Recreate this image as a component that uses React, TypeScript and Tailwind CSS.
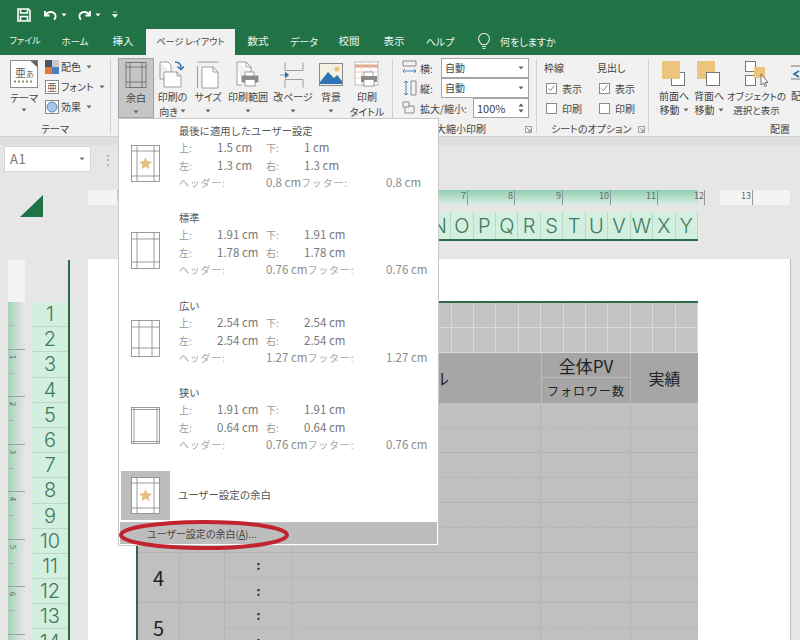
import React from "react";

const FONT = "font-['Noto_Sans_CJK_JP','Liberation_Sans',sans-serif] [font-feature-settings:'palt']";
const NUM = "font-['Inter','Liberation_Sans',sans-serif] font-light";

const Caret = ({ className = "" }: { className?: string }) => (
  <svg width="6" height="4" viewBox="0 0 6 4" className={className}>
    <path d="M0.500 0.500h5L3 3.500z" fill="currentColor" />
  </svg>
);

function SaveIcon() {
  return (
    <svg width="14" height="14" viewBox="0 0 14 14" fill="none" stroke="#fff" strokeWidth="1.600">
      <path d="M1 1h10.500L13 2.500V13H1z" />
      <path d="M3.500 1.500v3.500h7V1.500M3.500 13V8.500h7V13" />
    </svg>
  );
}
function UndoIcon({ flip = false }: { flip?: boolean }) {
  return (
    <svg width="15" height="14" viewBox="0 0 15 14" fill="none" stroke="#fff" strokeWidth="1.900" style={flip ? { transform: "scaleX(-1)" } : undefined}>
      <path d="M2 3v4.500h4.500" />
      <path d="M2.500 7C5 3.500 9 3 11.500 5.500c1.700 1.800 1.300 4.500-.5 6" />
    </svg>
  );
}
function Bulb() {
  return (
    <svg width="14" height="17" viewBox="0 0 14 17" fill="none" stroke="#dfe9e3" strokeWidth="1.100">
      <path d="M4.500 11.500C3.500 9.500 1.500 8.500 1.500 6a5.500 5.500 0 0 1 11 0c0 2.500-2 3.500-3 5.500z" />
      <path d="M5 13.500h4M5.500 15.500h3" />
    </svg>
  );
}

function ThemeIcon() {
  return (
    <svg width="28" height="28" viewBox="0 0 28 28">
      <rect x="0.500" y="0.500" width="27" height="27" fill="#fff" stroke="#8d8d8d" />
      <path d="M20 0.500h7.500v7z" fill="#666" />
      <text x="5" y="17" fontSize="11" fill="#666">亜</text>
      <text x="16" y="17" fontSize="8" fill="#666">あ</text>
      <path d="M4 21.500h2M8 21.500h2M12 21.500h2M16 21.500h2M20 21.500h2" stroke="#8a8f5b" strokeWidth="2" />
    </svg>
  );
}
function ColorIcon() {
  return (
    <svg width="14" height="14" viewBox="0 0 14 14" className="shrink-0">
      <rect width="7" height="7" fill="#44546a" />
      <rect x="7" width="7" height="7" fill="#c9c9c9" />
      <rect y="7" width="7" height="7" fill="#e07c3a" />
      <rect x="7" y="7" width="7" height="7" fill="#4d7fbd" />
    </svg>
  );
}
function FontIcon() {
  return (
    <div className="w-[14px] h-[14px] shrink-0 border border-[#8a8a8a] bg-white text-[10px] leading-[12px] text-center text-[#666]">亜</div>
  );
}
function EffectIcon() {
  return (
    <svg width="14" height="14" viewBox="0 0 14 14" className="shrink-0">
      <rect x="0.500" y="0.500" width="13" height="13" fill="#fff" stroke="#8a8a8a" />
      <circle cx="7" cy="7" r="5" fill="#a9c4e6" stroke="#5b87c0" />
    </svg>
  );
}
function MarginIcon() {
  return (
    <svg width="22" height="27" viewBox="0 0 22 27" fill="none" stroke="#666" strokeWidth="0.800">
      <rect x="1" y="0.500" width="20" height="25" />
      <path d="M1 5h20M1 20h20M5 0.500v25M17 0.500v25" />
    </svg>
  );
}
function OrientIcon() {
  return (
    <svg width="27" height="28" viewBox="0 0 27 28" fill="none" stroke="#888" strokeWidth="0.800">
      <path d="M1 1h8l3 3v7" fill="#fff" />
      <path d="M1 1v17h4" />
      <path d="M5 11h13l4 4v11H5z" fill="#fff" />
      <path d="M18 11v4h4" />
      <path d="M16 1c4 0 6 2 6 6" stroke="#2f6ea8" strokeWidth="1.500" />
      <path d="M18.500 5.500l3.500 3 3-3" stroke="#2f6ea8" strokeWidth="1.500" />
    </svg>
  );
}
function SizeIcon() {
  return (
    <svg width="22" height="28" viewBox="0 0 22 28" fill="none" stroke="#888" strokeWidth="0.800">
      <path d="M0.500 5v22M0.500 1h21" />
      <path d="M5 6h11l5 5v16H5z" fill="#fff" />
      <path d="M16 6v5h5" />
    </svg>
  );
}
function PrinterOverlay() {
  return (
    <g>
      <rect x="10" y="11" width="9" height="5" fill="#fff" stroke="#888" strokeWidth="0.800" />
      <rect x="7" y="15" width="16" height="6" fill="#8a8a8a" />
      <rect x="10" y="18.500" width="10" height="6.500" fill="#fff" stroke="#888" strokeWidth="0.800" />
    </g>
  );
}
function AreaIcon() {
  return (
    <svg width="27" height="28" viewBox="0 0 27 28" fill="none" stroke="#888" strokeWidth="0.800">
      <path d="M2 1h9l5 5v5M2 1v23h5" fill="#fff" />
      <path d="M11 1v5h5" />
      <PrinterOverlay />
    </svg>
  );
}
function BreakIcon() {
  return (
    <svg width="26" height="26" viewBox="0 0 26 26" fill="none" stroke="#888" strokeWidth="0.800">
      <path d="M5 0.500v8h18v-8M5 25.500v-8h18v8" />
      <path d="M0 13h6" stroke="#6f8aa0" />
      <path d="M5 9.500l4 3.500-4 3.500z" fill="#2f6ea8" stroke="none" />
    </svg>
  );
}
function BgIcon() {
  return (
    <svg width="24" height="23" viewBox="0 0 24 23">
      <rect x="0.500" y="0.500" width="23" height="22" fill="#f4f0e2" stroke="#8a8a8a" />
      <circle cx="18" cy="6" r="2.500" fill="#e8c37d" />
      <path d="M1 19l8-10 6 6 3-3 5 6v3H1z" fill="#2f75b5" />
    </svg>
  );
}
function TitleIcon() {
  return (
    <svg width="27" height="28" viewBox="0 0 27 28" fill="none" strokeWidth="0.800">
      <rect x="1" y="1" width="23" height="23" fill="#fff" stroke="#b9a9a0" />
      <path d="M1 5h23" stroke="#dfa98c" strokeWidth="3" />
      <path d="M1 11h23M1 17h23M8 1v23M16 1v23" stroke="#e0c6b6" />
      <PrinterOverlay />
    </svg>
  );
}
function BringIcon({ back = false }: { back?: boolean }) {
  return (
    <svg width="24" height="26" viewBox="0 0 24 26" fill="none">
      {back ? (
        <>
          <rect x="0" y="0" width="18" height="18" fill="#edc47e" />
          <rect x="9.500" y="11.500" width="13" height="13" fill="#fff" stroke="#777" />
        </>
      ) : (
        <>
          <rect x="9.500" y="11.500" width="13" height="13" fill="#fff" stroke="#777" />
          <rect x="0" y="0" width="18" height="18" fill="#edc47e" />
        </>
      )}
    </svg>
  );
}
function SelectIcon() {
  return (
    <svg width="24" height="27" viewBox="0 0 24 27" fill="none">
      <rect x="0.500" y="0.500" width="10" height="10" fill="#fff" stroke="#777" />
      <rect x="0.500" y="14.500" width="10" height="10" fill="#fff" stroke="#777" />
      <rect x="9" y="6" width="11" height="11" fill="#edc47e" />
      <path d="M16 13v11l2.500-2 1.500 3.500 1.500-.7-1.500-3.300h3z" fill="#fff" stroke="#555" strokeWidth="0.800" />
    </svg>
  );
}

function Big({ w, icon, l1, l2, caretInline, active }: { w: number; icon: React.ReactNode; l1: string; l2?: string; caretInline?: boolean; active?: boolean }) {
  return (
    <div
      style={{ width: w }}
      className={`flex flex-col items-center shrink-0 h-[60px] pt-[2px] text-[10px] text-[#444] whitespace-nowrap ${active ? "bg-[#c6c6c6] border border-[#a2a2a2]" : ""}`}
    >
      <div className="h-[29px] flex items-center justify-center">{icon}</div>
      <div className="mt-[1px] h-[14px] leading-[14px]">{l1}</div>
      {l2 ? (
        <div className="flex items-center gap-[2px] h-[14px]">
          {l2}
          {caretInline && <Caret className="text-[#666]" />}
        </div>
      ) : (
        <Caret className="text-[#666] mt-[5px]" />
      )}
    </div>
  );
}

function Divider({ ml = 0 }: { ml?: number }) {
  return <div style={{ marginLeft: ml }} className="w-px h-[74px] mt-[4px] bg-[#cfcfcf] shrink-0" />;
}

function Launcher() {
  return (
    <svg width="7" height="7" viewBox="0 0 8 8" fill="none" stroke="#777" strokeWidth="0.800">
      <path d="M0.500 7.500v-7h7v7z" />
      <path d="M2 2l4 4M6 3.500V6H3.500" />
    </svg>
  );
}

function Ribbon() {
  return (
    <div className="h-[81px] bg-[#f1f1f1] flex relative text-[#444] overflow-hidden text-[10px]">
      <div className="w-[110px] shrink-0 pt-[5px] relative">
        <div className="flex">
          <div className="w-[28px] ml-[10px] flex flex-col items-center leading-[13px]">
            <ThemeIcon />
            <div className="mt-[3px] whitespace-nowrap">テーマ</div>
            <Caret className="text-[#666] mt-[4px]" />
          </div>
          <div className="ml-[7px] flex flex-col gap-[6px] leading-[14px] whitespace-nowrap">
            <div className="flex items-center gap-[2px]"><ColorIcon />配色<Caret className="ml-[3px] text-[#666]" /></div>
            <div className="flex items-center gap-[2px]"><FontIcon />フォント<Caret className="ml-[3px] text-[#666]" /></div>
            <div className="flex items-center gap-[2px]"><EffectIcon />効果<Caret className="ml-[3px] text-[#666]" /></div>
          </div>
        </div>
        <div className="absolute left-0 w-[110px] bottom-0 text-center leading-[14px]">テーマ</div>
      </div>
      <Divider />
      <div className="w-[7px] shrink-0" />
      <div className="flex items-start pt-[3px] shrink-0">
        <Big w={36} icon={<MarginIcon />} l1="余白" active />
        <div className="w-[1px]" />
        <Big w={35} icon={<OrientIcon />} l1="印刷の" l2="向き" caretInline />
        <Big w={36} icon={<SizeIcon />} l1="サイズ" />
        <Big w={44} icon={<AreaIcon />} l1="印刷範囲" />
        <Big w={46} icon={<BreakIcon />} l1="改ページ" />
        <Big w={30} icon={<BgIcon />} l1="背景" />
        <Big w={42} icon={<TitleIcon />} l1="印刷" l2="タイトル" />
      </div>
      <Divider ml={4} />
      <div className="w-[143px] shrink-0 pt-[3px] pl-[9px] relative">
        <div className="flex items-center h-[20px]">
          <svg width="15" height="16" viewBox="0 0 15 16" fill="none" stroke="#777" strokeWidth="0.800"><path d="M1 1h13v5H1z" /><path d="M1 11h13M3 9L1 11l2 2M12 9l2 2-2 2" stroke="#2f6ea8" /></svg>
          <span className="ml-[3px] w-[21px]">横:</span>
          <div className="w-[88px] h-[20px] border border-[#a5a5a5] bg-white px-[3px] flex items-center justify-between leading-[18px]">自動<Caret className="text-[#666] mr-[1px]" /></div>
        </div>
        <div className="flex items-center h-[20px]">
          <svg width="15" height="16" viewBox="0 0 15 16" fill="none" stroke="#777" strokeWidth="0.800"><path d="M9 1h5v14H9z" /><path d="M4 1v14M2 3l2-2 2 2M2 13l2 2 2-2" stroke="#2f6ea8" /></svg>
          <span className="ml-[3px] w-[21px]">縦:</span>
          <div className="w-[88px] h-[20px] border border-[#a5a5a5] bg-white px-[3px] flex items-center justify-between leading-[18px]">自動<Caret className="text-[#666] mr-[1px]" /></div>
        </div>
        <div className="flex items-center h-[20px]">
          <svg width="13" height="14" viewBox="0 0 13 14" fill="none" stroke="#777" strokeWidth="0.800"><path d="M1 1h6v5H1z" /><path d="M3 6v6h9V5H7" /></svg>
          <span className="ml-[5px] w-[53px] whitespace-nowrap">拡大/縮小:</span>
          <div className="w-[56px] h-[20px] border border-[#a5a5a5] bg-white px-[3px] flex items-center justify-between text-[11px]">100%
            <span className="flex flex-col gap-[2px] mr-[1px] text-[#555]">
              <svg width="6" height="4" viewBox="0 0 6 4"><path d="M0.500 3.500h5L3 0.500z" fill="currentColor" /></svg>
              <Caret />
            </span>
          </div>
        </div>
        <div className="absolute left-0 right-[4px] bottom-0 flex justify-end items-center leading-[14px]">
          <span className="mr-[39px]">拡大縮小印刷</span><Launcher />
        </div>
      </div>
      <Divider />
      <div className="w-[111px] shrink-0 pt-[4px] relative">
        <div className="flex pl-[7px]">
          {["枠線", "見出し"].map((h, i) => (
            <div key={h} className={`flex flex-col ${i === 0 ? "w-[53px]" : ""}`}>
              <div className="h-[18px] leading-[18px]">{h}</div>
              <div className="flex items-center h-[20px] ml-[2px] mt-[1px] gap-[5px]">
                <span className="w-[11px] h-[11px] border border-[#8c8c8c] bg-white flex items-center justify-center">
                  <svg width="9" height="9" viewBox="0 0 9 9" fill="none" stroke="#777" strokeWidth="0.900"><path d="M1.500 4.500l2 2 4-5" /></svg>
                </span>表示
              </div>
              <div className="flex items-center h-[20px] ml-[2px] gap-[5px]">
                <span className="w-[11px] h-[11px] border border-[#8c8c8c] bg-white" />印刷
              </div>
            </div>
          ))}
        </div>
        <div className="absolute left-[14px] right-[3px] bottom-0 flex justify-between items-center leading-[14px]">
          <span className="whitespace-nowrap">シートのオプション</span><Launcher />
        </div>
      </div>
      <Divider />
      <div className="flex-1 pt-[6px] relative leading-[14px]">
        <div className="flex">
          <div className="w-[36px] ml-[7px] flex flex-col items-center whitespace-nowrap"><BringIcon /><div className="mt-[2px]">前面へ</div><div className="flex items-center gap-[3px]">移動<Caret className="text-[#666]" /></div></div>
          <div className="w-[32px] ml-[1px] flex flex-col items-center whitespace-nowrap"><BringIcon back /><div className="mt-[2px]">背面へ</div><div className="flex items-center gap-[3px]">移動<Caret className="text-[#666]" /></div></div>
          <div className="w-[53px] ml-[5px] flex flex-col items-center whitespace-nowrap text-[9.500px]"><SelectIcon /><div className="mt-[1px]">オブジェクトの</div><div>選択と表示</div></div>
          <div className="ml-[8px] flex flex-col whitespace-nowrap">
            <svg width="14" height="26" viewBox="0 0 14 26" fill="none"><path d="M0 5h14M0 18h14" stroke="#777" /><path d="M8 10l-5 3 5 3" stroke="#2f6ea8" strokeWidth="1.800" /></svg>
            <div className="mt-[2px]">配</div>
          </div>
        </div>
        <div className="absolute left-[121px] bottom-0">配置</div>
      </div>
    </div>
  );
}

function Thumb({ x1, x2, y1, y2, star }: { x1: number; x2: number; y1: number; y2: number; star?: boolean }) {
  return (
    <svg width="29" height="37" viewBox="0 0 29 37" fill="none" stroke="#7c8686" strokeWidth="0.800">
      <rect x="0.500" y="0.500" width="28" height="36" fill="#fff" />
      <path d={`M${x1} 0.500V36.500M${x2} 0.500V36.500M0.500 ${y1}H28.500M0.500 ${y2}H28.500`} />
      {star && <path d="M14.500 12l1.900 4.300 4.600.4-3.500 3 1.100 4.600-4.100-2.500-4.100 2.500 1.100-4.600-3.500-3 4.600-.4z" fill="#e7bf80" stroke="none" />}
    </svg>
  );
}

function Preset({ name, top, bottom, left, right, head, foot, thumb, h }: { name: string; top: string; bottom: string; left: string; right: string; head: string; foot: string; thumb: React.ReactNode; h: number }) {
  return (
    <div style={{ height: h }} className="flex shrink-0">
      <div className="w-[60px] shrink-0 pl-[12px] pt-[23px]">{thumb}</div>
      <div className="flex-1 text-[11.500px] leading-[17.500px] text-[#777] [font-feature-settings:normal]">
        <div className="text-[#555] text-[10.300px] leading-[17px]">{name}</div>
        <div className="flex"><span className="w-[38px] text-[10px] text-[#999]">上:</span><span className="w-[49px]">{top}</span><span className="w-[38px] text-[10px] text-[#999]">下:</span><span>{bottom}</span></div>
        <div className="flex"><span className="w-[38px] text-[10px] text-[#999]">左:</span><span className="w-[49px]">{left}</span><span className="w-[38px] text-[10px] text-[#999]">右:</span><span>{right}</span></div>
        <div className="flex text-[#8c8c8c]">
          <div className="w-[207px] flex whitespace-nowrap">
            <span className="w-[87px] text-[10px] tracking-[0.800px] text-[#aaa]">ヘッダー:</span>
            <span>{head}</span>
            <span className="text-[10px] tracking-[0.800px] text-[#aaa]">フッター:</span>
          </div>
          <span>{foot}</span>
        </div>
      </div>
    </div>
  );
}

function MarginMenu() {
  return (
    <div className="absolute left-[118px] top-[118px] w-[321px] h-[428px] bg-white border border-[#c8c8c8] flex flex-col z-10">
      <div className="h-[3px] shrink-0" />
      <Preset h={87} name="最後に適用したユーザー設定" top="1.5 cm" bottom="1 cm" left="1.3 cm" right="1.3 cm" head="0.8 cm" foot="0.8 cm" thumb={<Thumb x1={6} x2={23} y1={6} y2={31} star />} />
      <Preset h={88} name="標準" top="1.91 cm" bottom="1.91 cm" left="1.78 cm" right="1.78 cm" head="0.76 cm" foot="0.76 cm" thumb={<Thumb x1={6} x2={23} y1={7} y2={30} />} />
      <Preset h={87} name="広い" top="2.54 cm" bottom="2.54 cm" left="2.54 cm" right="2.54 cm" head="1.27 cm" foot="1.27 cm" thumb={<Thumb x1={8} x2={21} y1={7} y2={28} />} />
      <Preset h={86} name="狭い" top="1.91 cm" bottom="1.91 cm" left="0.64 cm" right="0.64 cm" head="0.76 cm" foot="0.76 cm" thumb={<Thumb x1={3} x2={26} y1={2.500} y2={34.500} />} />
      <div className="flex items-center h-[50px] shrink-0 pl-[2px]">
        <div className="w-[49px] h-[49px] bg-[#bdbdbd] flex items-center justify-center">
          <Thumb x1={6} x2={23} y1={6} y2={31} star />
        </div>
        <span className="ml-[8px] text-[10.500px] text-[#555]">ユーザー設定の余白</span>
      </div>
      <div className="mt-auto h-[23px] mx-[1px] mb-[1px] bg-[#bdbdbd] border-t border-white flex items-center pl-[27px] text-[10px] text-[#444] shrink-0">
        ユーザー設定の余白(<span className="underline">A</span>)...
      </div>
    </div>
  );
}

const COLS = "ABCDEFGHIJKLMNOPQRSTUVWXY".split("");
const COL_TPL = "grid grid-cols-[42px_45px_68px_248px_90px_67px]";

function Sheet() {
  const smallCells = Array.from({ length: 50 });
  const rows = [
    { n: "", a: "", b: "" },
    { n: "", a: "", b: "" },
    { n: "", a: "", b: "" },
    { n: "4", a: ":", b: ":" },
    { n: "5", a: ":", b: ":" },
  ];
  return (
    <div className="w-[562px] ml-[48px] mt-[42px] border-t-2 border-l-2 border-[#2c6b4a] text-[#222] [font-feature-settings:normal]">
      <div className="grid grid-cols-[repeat(25,1fr)] bg-[#c4c4c4]">
        {smallCells.map((_, i) => (
          <div key={i} className="h-[25px] border-r border-b border-[#dadada]" />
        ))}
      </div>
      <div className={`${COL_TPL} h-[50px] bg-[#a6a6a6]`}>
        <div /><div /><div />
        <div className="flex items-center justify-center text-[16px]">タイトル</div>
        <div className="border-l border-r border-[#bdbdbd] flex flex-col">
          <div className="h-[25px] border-b border-[#bdbdbd] flex items-center justify-center text-[17px] leading-none">全体PV</div>
          <div className="flex-1 flex items-center justify-center text-[12px] tracking-[1px]">フォロワー数</div>
        </div>
        <div className="flex items-center justify-center text-[16px]">実績</div>
      </div>
      {rows.map((r, i) => (
        <div key={i} className={`${COL_TPL} h-[50px] bg-[#c0c0c0] border-b border-[#b3b3b3]`}>
          <div className="flex items-center justify-center text-[20px] border-r border-[#b3b3b3]">{r.n}</div>
          <div className="border-r border-[#b3b3b3]" />
          <div className="border-r border-dashed border-[#b3b3b3] flex flex-col text-[12px] font-bold">
            <div className="h-[25px] border-b border-dashed border-[#b3b3b3] flex items-center justify-center">{r.a}</div>
            <div className="h-[25px] flex items-center justify-center">{r.b}</div>
          </div>
          <div className="border-r border-[#b3b3b3]">
            <div className="h-[25px] border-b border-dashed border-[#b3b3b3]" />
          </div>
          <div className="border-r border-[#b3b3b3]">
            <div className="h-[25px] border-b border-dashed border-[#b3b3b3]" />
          </div>
          <div>
            <div className="h-[25px] border-b border-dashed border-[#b3b3b3]" />
          </div>
        </div>
      ))}
    </div>
  );
}

const GREEN_H = "bg-gradient-to-b from-[#8fcdb0] to-[#dcefe6]";

function Workspace() {
  const ticks = [
    { n: "7", w: 47 }, { n: "8", w: 47 }, { n: "9", w: 48 }, { n: "10", w: 48 }, { n: "11", w: 47 },
  ];
  return (
    <div className="flex flex-1 min-h-0 bg-[#e6e6e6] overflow-hidden">
      <div className="w-[88px] shrink-0">
        <svg width="23" height="22" viewBox="0 0 23 22" className="ml-[20px] mt-[23px] block">
          <path d="M23 0v22H0z" fill="#217346" />
        </svg>
        <div className="flex mt-[43px] ml-[8px]">
          <div className="w-[17px]">
            <div className="h-[42px] bg-[#f4f4f4]" />
            <div className="h-[340px] bg-gradient-to-r from-[#a3d3bb] to-[#e6e6e6]">
              {["", "1", "2", "3", "4", "5", "6"].map((n, i) => (
                <div key={i} className="h-[47.500px] border-b border-[#97a59e] relative">
                  <div className="w-[6px] h-[24px] border-b border-[#a5b3ac]" />
                  {n && <span className="absolute left-[3px] top-[2px] text-[8px] leading-[10px] text-[#666] rotate-90">{n}</span>}
                </div>
              ))}
            </div>
          </div>
          <div className="w-[38px] ml-[7px] pt-[42px] border-r-2 border-[#2c6b4a]">
            {Array.from({ length: 14 }, (_, i) => (
              <div key={i} className={`h-[25.200px] bg-[#d3efe0] border-b border-[#bcd9ca] flex items-center justify-center text-[20px] leading-none text-[#3d7a5c] ${NUM}`}>{i + 1}</div>
            ))}
          </div>
        </div>
      </div>
      <div className="flex-1 min-w-0">
        <div className="mt-[18px] h-[15px] flex text-[9px] text-[#666]">
          <div className="w-[29px] bg-[#f4f4f4]" />
          <div className={`w-[304px] ${GREEN_H}`} />
          {ticks.map((t) => (
            <div key={t.n} style={{ width: t.w }} className={`${GREEN_H} border-r border-[#8d9a93] text-right pr-[1px] leading-[12px]`}>{t.n}</div>
          ))}
          <div className={`w-[40px] ${GREEN_H}`} />
          <div className="w-[7px] border-r border-[#8d9a93] flex justify-end leading-[12px]">12</div>
          <div className="w-[15px]" />
          <div className="w-[33px] bg-[#f4f4f4] border-r border-[#999] text-right pr-[1px] leading-[12px]">13</div>
          <div className="w-[37px] bg-[#f4f4f4]" />
        </div>
        <div className="mt-[7px] ml-[49px] w-[561px] h-[29px] flex border-b-2 border-[#2c6b4a] bg-[#d3efe0]">
          {COLS.map((c) => (
            <div key={c} className={`flex-1 border-r border-[#b9d8c8] flex items-center justify-center text-[20px] leading-none text-[#3d7a5c] ${NUM}`}>{c}</div>
          ))}
        </div>
        <div className="mt-[18px] w-[703px] h-[400px] bg-white border-r border-[#bdbdbd] overflow-hidden">
          <Sheet />
        </div>
      </div>
    </div>
  );
}

export default function App() {
  const tabs: [string, number, string][] = [["ファイル", 50, "text-[9px]"], ["ホーム", 50, "text-[9.500px]"], ["挿入", 46, "text-[10.500px]"]];
  const tabs2: [string, number, string][] = [["数式", 46, "text-[10.500px]"], ["データ", 46, "text-[10px]"], ["校閲", 44, "text-[10.500px]"], ["表示", 46, "text-[10.500px]"], ["ヘルプ", 46, "text-[10px]"]];
  return (
    <div className={`relative w-[800px] h-[640px] overflow-hidden flex flex-col bg-[#e6e6e6] ${FONT}`}>
      <div className="h-[29px] bg-[#217346] flex items-center text-white shrink-0">
        <span className="ml-[17px]"><SaveIcon /></span>
        <span className="ml-[12px]"><UndoIcon /></span>
        <Caret className="ml-[3px] text-white" />
        <span className="ml-[10px]"><UndoIcon flip /></span>
        <Caret className="ml-[3px] text-white" />
        <svg width="6" height="7" viewBox="0 0 6 7" className="ml-[11px]"><path d="M1 1h4M0.500 3.500h5L3 6.500z" stroke="#fff" strokeWidth="0.600" fill="#fff" /></svg>
      </div>
      <div className="h-[26px] bg-[#217346] flex text-[10.500px] text-[#eef5f0] shrink-0">
        {tabs.map(([t, w, c]) => (
          <div key={t} style={{ width: w }} className={`flex items-center justify-center pb-[2px] ${c}`}>{t}</div>
        ))}
        <div className="w-[89px] bg-[#f1f1f1] text-[#444] text-[9px] flex items-center justify-center pb-[1px] whitespace-nowrap">ページ レイアウト</div>
        {tabs2.map(([t, w, c]) => (
          <div key={t} style={{ width: w }} className={`flex items-center justify-center pb-[2px] ${c}`}>{t}</div>
        ))}
        <div className="ml-[14px] flex items-center gap-[9px] pb-[2px] text-[10px]"><Bulb />何をしますか</div>
      </div>
      <Ribbon />
      <div className="h-[9px] bg-[#dfdfdf] border-t border-[#d0d0d0] shrink-0" />
      <div className="h-[27px] bg-[#e6e6e6] flex items-center pl-[4px] shrink-0">
        <div className="w-[87px] h-[26px] bg-white border border-[#d4d4d4] flex items-center justify-between pl-[5px] pr-[5px] text-[13px] tracking-[0.500px] text-[#777]">
          A1<Caret className="text-[#777]" />
        </div>
        <div className="ml-[11px] text-[#999] text-[12px]">⋮</div>
      </div>
      <Workspace />
      <MarginMenu />
      <svg width="172" height="34" viewBox="0 0 172 34" fill="none" className="absolute left-[118px] top-[518px] z-20">
        <ellipse cx="86" cy="17" rx="83" ry="13" stroke="#c1242f" strokeWidth="4" />
      </svg>
    </div>
  );
}
